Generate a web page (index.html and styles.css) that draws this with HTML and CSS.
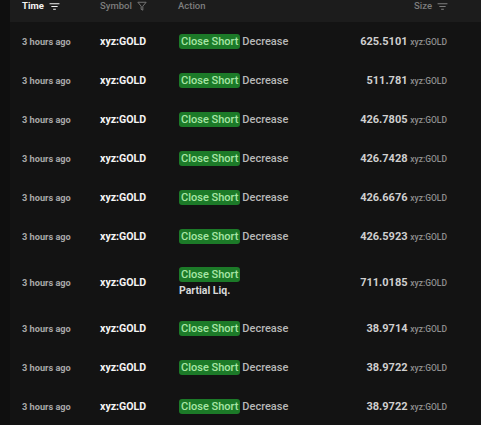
FILE: index.html
```html
<!DOCTYPE html>
<html lang="en">
<head>
  <meta charset="UTF-8" />
  <meta name="viewport" content="width=device-width, initial-scale=1.0"/>
  <title>Trades</title>
  <link rel="stylesheet" href="styles.css">
</head>
<body>
  <div class="table">
    <!-- Başlık satırı -->
    <div class="row head">
      <div class="th active">Time
        <svg class="sort-icon" viewBox="0 0 12 10"><path d="M0.5 2h11M2.5 5h7M4.5 8h3" stroke="currentColor" stroke-width="1.2" fill="none"/></svg>
      </div>
      <div class="th">Symbol
        <svg class="funnel-icon" viewBox="0 0 12 12"><path d="M1 1.5h10L7 6.2V11L5 10V6.2z" stroke="currentColor" stroke-width="1.1" fill="none" stroke-linejoin="round"/></svg>
      </div>
      <div class="th">Action</div>
      <div class="th right">Size
        <svg class="sort-icon" viewBox="0 0 12 10"><path d="M0.5 2h11M2.5 5h7M4.5 8h3" stroke="currentColor" stroke-width="1.2" fill="none"/></svg>
      </div>
    </div>

    <div class="row">
      <div class="time">3 hours ago</div>
      <div class="symbol">xyz:GOLD</div>
      <div class="action"><span class="badge">Close Short</span><span class="dir">Decrease</span></div>
      <div class="size">625.5101 <span class="unit">xyz:GOLD</span></div>
    </div>
    <div class="row">
      <div class="time">3 hours ago</div>
      <div class="symbol">xyz:GOLD</div>
      <div class="action"><span class="badge">Close Short</span><span class="dir">Decrease</span></div>
      <div class="size">511.781 <span class="unit">xyz:GOLD</span></div>
    </div>
    <div class="row">
      <div class="time">3 hours ago</div>
      <div class="symbol">xyz:GOLD</div>
      <div class="action"><span class="badge">Close Short</span><span class="dir">Decrease</span></div>
      <div class="size">426.7805 <span class="unit">xyz:GOLD</span></div>
    </div>
    <div class="row">
      <div class="time">3 hours ago</div>
      <div class="symbol">xyz:GOLD</div>
      <div class="action"><span class="badge">Close Short</span><span class="dir">Decrease</span></div>
      <div class="size">426.7428 <span class="unit">xyz:GOLD</span></div>
    </div>
    <div class="row">
      <div class="time">3 hours ago</div>
      <div class="symbol">xyz:GOLD</div>
      <div class="action"><span class="badge">Close Short</span><span class="dir">Decrease</span></div>
      <div class="size">426.6676 <span class="unit">xyz:GOLD</span></div>
    </div>
    <div class="row">
      <div class="time">3 hours ago</div>
      <div class="symbol">xyz:GOLD</div>
      <div class="action"><span class="badge">Close Short</span><span class="dir">Decrease</span></div>
      <div class="size">426.5923 <span class="unit">xyz:GOLD</span></div>
    </div>
    <div class="row tall">
      <div class="time">3 hours ago</div>
      <div class="symbol">xyz:GOLD</div>
      <div class="action stack"><span class="badge">Close Short</span><span class="liq">Partial Liq.</span></div>
      <div class="size">711.0185 <span class="unit">xyz:GOLD</span></div>
    </div>
    <div class="row">
      <div class="time">3 hours ago</div>
      <div class="symbol">xyz:GOLD</div>
      <div class="action"><span class="badge">Close Short</span><span class="dir">Decrease</span></div>
      <div class="size">38.9714 <span class="unit">xyz:GOLD</span></div>
    </div>
    <div class="row">
      <div class="time">3 hours ago</div>
      <div class="symbol">xyz:GOLD</div>
      <div class="action"><span class="badge">Close Short</span><span class="dir">Decrease</span></div>
      <div class="size">38.9722 <span class="unit">xyz:GOLD</span></div>
    </div>
    <div class="row">
      <div class="time">3 hours ago</div>
      <div class="symbol">xyz:GOLD</div>
      <div class="action"><span class="badge">Close Short</span><span class="dir">Decrease</span></div>
      <div class="size">38.9722 <span class="unit">xyz:GOLD</span></div>
    </div>
  </div>
</body>
</html>
```

FILE: styles.css
```css
body {
  background: #0f0f0f;
  margin: 0;
  font-family: Roboto, 'Liberation Sans', Arial, sans-serif;
  overflow: hidden;
}
.table {
  margin-left: 10px;
  background: #131313;
  min-height: 425px;
}
.row {
  display: grid;
  grid-template-columns: 78px 78px 1fr auto;
  align-items: center;
  height: 39px;
  padding: 0 34px 0 12px;
}
.row.tall {
  height: 53px;
}
.row.head {
  height: 22px;
  align-items: start;
  background: #1c1c1c;
}
.th {
  display: flex;
  align-items: center;
  gap: 5px;
  font-size: 9.5px;
  line-height: 11px;
  font-weight: 500;
  color: #7d7d7d;
}
.th.active {
  color: #f2f2f2;
  font-weight: 700;
}
.th.right {
  justify-content: flex-end;
  margin-right: -1px;
}
.sort-icon {
  width: 11px;
  height: 9px;
  margin-top: 2px;
}
.funnel-icon {
  width: 10px;
  height: 10px;
}
.time {
  font-size: 9.2px;
  font-weight: 700;
  color: #a8a8a8;
}
.symbol {
  font-size: 10.6px;
  font-weight: 700;
  color: #f4f4f4;
}
.action {
  display: flex;
  align-items: center;
  gap: 2px;
  margin-left: 1px;
}
.action.stack {
  flex-direction: column;
  align-items: flex-start;
  gap: 2px;
  margin-top: -1px;
}
.badge {
  background: #1c7a28;
  color: #a8e6a6;
  font-size: 11px;
  font-weight: 500;
  line-height: 15px;
  padding: 0 2px;
  border-radius: 3px;
}
.dir {
  font-size: 11px;
  font-weight: 500;
  color: #b8b8b8;
}
.liq {
  font-size: 10.5px;
  font-weight: 700;
  color: #d8d8d8;
}
.size {
  text-align: right;
  font-size: 11px;
  font-weight: 700;
  color: #cfcfcf;
}
.unit {
  font-size: 8.5px;
  font-weight: 500;
  color: #8f8f8f;
}
```
